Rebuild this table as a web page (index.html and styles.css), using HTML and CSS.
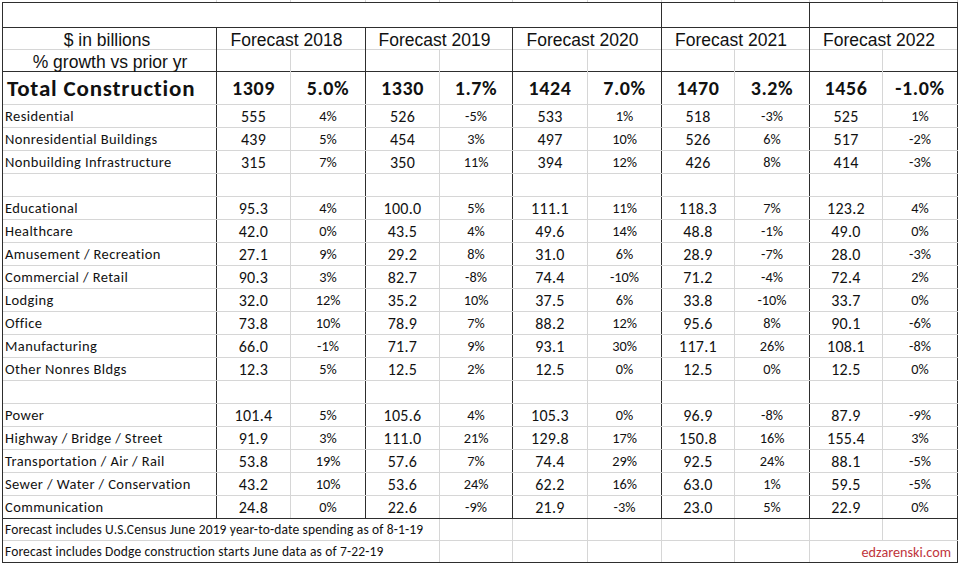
FILE: index.html
```html
<!DOCTYPE html>
<html>
<head>
<meta charset="utf-8">
<link rel="stylesheet" href="styles.css">
</head>
<body>
<div class="sliver"><span></span><span></span><span></span><span></span><span></span><span></span><span></span><span></span><span></span><span></span><span></span></div>
<div class="sheet">
  <div class="row top"><div class="c s7 dr"></div><div class="c s2 dr"></div><div class="c s2 dr"></div></div>
  <div class="row hdr">
    <div class="c dr arial lh">$ in billions</div>
    <div class="c s2 dr arial fc">Forecast 2018</div>
    <div class="c s2 dr arial fc">Forecast 2019</div>
    <div class="c s2 dr arial fc">Forecast 2020</div>
    <div class="c s2 dr arial fc">Forecast 2021</div>
    <div class="c s2 dr arial fc">Forecast 2022</div>
  </div>
  <div class="row sub">
    <div class="c dr arial lh2">% growth vs prior yr</div>
    <div class="c"></div><div class="c dr"></div><div class="c"></div><div class="c dr"></div><div class="c"></div><div class="c dr"></div><div class="c"></div><div class="c dr"></div><div class="c"></div><div class="c dr"></div>
  </div>
  <div class="row total">
    <div class="c lbl">Total Construction</div>
    <div class="c v">1309</div><div class="c p">5.0%</div>
    <div class="c v">1330</div><div class="c p">1.7%</div>
    <div class="c v">1424</div><div class="c p">7.0%</div>
    <div class="c v">1470</div><div class="c p">3.2%</div>
    <div class="c v">1456</div><div class="c p">-1.0%</div>
  </div>
  <div class="row data"><div class="c lbl">Residential</div><div class="c v">555</div><div class="c p">4%</div><div class="c v">526</div><div class="c p">-5%</div><div class="c v">533</div><div class="c p">1%</div><div class="c v">518</div><div class="c p">-3%</div><div class="c v">525</div><div class="c p">1%</div></div>
  <div class="row data"><div class="c lbl">Nonresidential Buildings</div><div class="c v">439</div><div class="c p">5%</div><div class="c v">454</div><div class="c p">3%</div><div class="c v">497</div><div class="c p">10%</div><div class="c v">526</div><div class="c p">6%</div><div class="c v">517</div><div class="c p">-2%</div></div>
  <div class="row data"><div class="c lbl">Nonbuilding Infrastructure</div><div class="c v">315</div><div class="c p">7%</div><div class="c v">350</div><div class="c p">11%</div><div class="c v">394</div><div class="c p">12%</div><div class="c v">426</div><div class="c p">8%</div><div class="c v">414</div><div class="c p">-3%</div></div>
  <div class="row data"><div class="c lbl"></div><div class="c v"></div><div class="c p"></div><div class="c v"></div><div class="c p"></div><div class="c v"></div><div class="c p"></div><div class="c v"></div><div class="c p"></div><div class="c v"></div><div class="c p"></div></div>
  <div class="row data"><div class="c lbl">Educational</div><div class="c v">95.3</div><div class="c p">4%</div><div class="c v">100.0</div><div class="c p">5%</div><div class="c v">111.1</div><div class="c p">11%</div><div class="c v">118.3</div><div class="c p">7%</div><div class="c v">123.2</div><div class="c p">4%</div></div>
  <div class="row data"><div class="c lbl">Healthcare</div><div class="c v">42.0</div><div class="c p">0%</div><div class="c v">43.5</div><div class="c p">4%</div><div class="c v">49.6</div><div class="c p">14%</div><div class="c v">48.8</div><div class="c p">-1%</div><div class="c v">49.0</div><div class="c p">0%</div></div>
  <div class="row data"><div class="c lbl">Amusement / Recreation</div><div class="c v">27.1</div><div class="c p">9%</div><div class="c v">29.2</div><div class="c p">8%</div><div class="c v">31.0</div><div class="c p">6%</div><div class="c v">28.9</div><div class="c p">-7%</div><div class="c v">28.0</div><div class="c p">-3%</div></div>
  <div class="row data"><div class="c lbl">Commercial / Retail</div><div class="c v">90.3</div><div class="c p">3%</div><div class="c v">82.7</div><div class="c p">-8%</div><div class="c v">74.4</div><div class="c p">-10%</div><div class="c v">71.2</div><div class="c p">-4%</div><div class="c v">72.4</div><div class="c p">2%</div></div>
  <div class="row data"><div class="c lbl">Lodging</div><div class="c v">32.0</div><div class="c p">12%</div><div class="c v">35.2</div><div class="c p">10%</div><div class="c v">37.5</div><div class="c p">6%</div><div class="c v">33.8</div><div class="c p">-10%</div><div class="c v">33.7</div><div class="c p">0%</div></div>
  <div class="row data"><div class="c lbl">Office</div><div class="c v">73.8</div><div class="c p">10%</div><div class="c v">78.9</div><div class="c p">7%</div><div class="c v">88.2</div><div class="c p">12%</div><div class="c v">95.6</div><div class="c p">8%</div><div class="c v">90.1</div><div class="c p">-6%</div></div>
  <div class="row data"><div class="c lbl">Manufacturing</div><div class="c v">66.0</div><div class="c p">-1%</div><div class="c v">71.7</div><div class="c p">9%</div><div class="c v">93.1</div><div class="c p">30%</div><div class="c v">117.1</div><div class="c p">26%</div><div class="c v">108.1</div><div class="c p">-8%</div></div>
  <div class="row data"><div class="c lbl">Other Nonres Bldgs</div><div class="c v">12.3</div><div class="c p">5%</div><div class="c v">12.5</div><div class="c p">2%</div><div class="c v">12.5</div><div class="c p">0%</div><div class="c v">12.5</div><div class="c p">0%</div><div class="c v">12.5</div><div class="c p">0%</div></div>
  <div class="row data"><div class="c lbl"></div><div class="c v"></div><div class="c p"></div><div class="c v"></div><div class="c p"></div><div class="c v"></div><div class="c p"></div><div class="c v"></div><div class="c p"></div><div class="c v"></div><div class="c p"></div></div>
  <div class="row data"><div class="c lbl">Power</div><div class="c v">101.4</div><div class="c p">5%</div><div class="c v">105.6</div><div class="c p">4%</div><div class="c v">105.3</div><div class="c p">0%</div><div class="c v">96.9</div><div class="c p">-8%</div><div class="c v">87.9</div><div class="c p">-9%</div></div>
  <div class="row data"><div class="c lbl">Highway / Bridge / Street</div><div class="c v">91.9</div><div class="c p">3%</div><div class="c v">111.0</div><div class="c p">21%</div><div class="c v">129.8</div><div class="c p">17%</div><div class="c v">150.8</div><div class="c p">16%</div><div class="c v">155.4</div><div class="c p">3%</div></div>
  <div class="row data"><div class="c lbl">Transportation / Air / Rail</div><div class="c v">53.8</div><div class="c p">19%</div><div class="c v">57.6</div><div class="c p">7%</div><div class="c v">74.4</div><div class="c p">29%</div><div class="c v">92.5</div><div class="c p">24%</div><div class="c v">88.1</div><div class="c p">-5%</div></div>
  <div class="row data"><div class="c lbl">Sewer / Water / Conservation</div><div class="c v">43.2</div><div class="c p">10%</div><div class="c v">53.6</div><div class="c p">24%</div><div class="c v">62.2</div><div class="c p">16%</div><div class="c v">63.0</div><div class="c p">1%</div><div class="c v">59.5</div><div class="c p">-5%</div></div>
  <div class="row data last"><div class="c lbl">Communication</div><div class="c v">24.8</div><div class="c p">0%</div><div class="c v">22.6</div><div class="c p">-9%</div><div class="c v">21.9</div><div class="c p">-3%</div><div class="c v">23.0</div><div class="c p">5%</div><div class="c v">22.9</div><div class="c p">0%</div></div>
  <div class="row foot">
    <div class="c s4 note">Forecast includes U.S.Census June 2019 year-to-date spending as of 8-1-19</div>
    <div class="c"></div><div class="c"></div><div class="c"></div><div class="c"></div><div class="c"></div><div class="c"></div><div class="c dr"></div>
  </div>
  <div class="row foot end">
    <div class="c s4 note">Forecast includes Dodge construction starts June data as of 7-22-19</div>
    <div class="c"></div><div class="c"></div><div class="c"></div><div class="c"></div><div class="c"></div><div class="c s2 dr credit">edzarenski.com</div>
  </div>
</div>
</body>
</html>
```

FILE: styles.css
```css
:root {
  --dark: #2e2e2e;
  --light: #d6d6d6;
  --cols: 214px 74px 75px 74px 73px 75px 74px 73px 75px 73px 75px;
}

* { box-sizing: border-box; }

html, body {
  margin: 0;
  padding: 0;
  background: #fff;
}

body {
  width: 960px;
  height: 564px;
  overflow: hidden;
  font-family: Carlito, Calibri, Lato, "Open Sans", sans-serif;
  color: #111;
}

.sliver {
  display: grid;
  grid-template-columns: var(--cols);
  height: 2px;
  margin-left: 3px;
}
.sliver span { border-right: 1px solid var(--light); }

.sheet {
  margin-left: 2px;
  width: 956px;
  border-left: 1px solid var(--dark);
}

.row {
  display: grid;
  grid-template-columns: var(--cols);
  border-bottom: 1px solid var(--light);
}

.c {
  border-right: 1px solid var(--light);
  display: flex;
  align-items: center;
  justify-content: center;
  white-space: nowrap;
  min-width: 0;
}

.dr, .lbl, .p { border-right-color: var(--dark); }

.s2 { grid-column: span 2; }
.s4 { grid-column: span 4; }
.s7 { grid-column: span 7; }

.top {
  height: 26px;
  border-top: 1px solid var(--dark);
  border-bottom-color: var(--dark);
}

.hdr { height: 22px; }
.sub { height: 22px; border-bottom-color: var(--dark); }

.arial {
  font-family: "Liberation Sans", Arial, sans-serif;
  font-size: 17.5px;
  color: #111;
}
.hdr .c { padding-top: 2px; }
.lh { padding-right: 5px; }
.lh2 { padding-left: 1px; padding-top: 2px; }
.fc { padding-right: 9px; }

.total { height: 33px; }
.total .lbl {
  font-weight: 700;
  font-size: 23px;
  letter-spacing: 0.8px;
  padding-left: 4px;
}
.total .v, .total .p {
  font-weight: 700;
  font-size: 20px;
  letter-spacing: 0.6px;
}

.data { height: 23px; }
.data.last { border-bottom-color: var(--dark); }

.lbl {
  justify-content: flex-start;
  padding-left: 2px;
  font-size: 14.5px;
  letter-spacing: 0.4px;
}
.v { font-size: 16px; letter-spacing: 0.3px; }
.p { font-size: 14.3px; }

.foot { height: 22px; }
.foot.end { border-bottom-color: var(--dark); }

.note {
  justify-content: flex-start;
  padding-left: 2px;
  font-size: 13.5px;
  letter-spacing: 0.15px;
  overflow: visible;
}

.credit {
  justify-content: flex-end;
  padding-right: 6px;
  font-size: 14.2px;
  color: #c0343c;
}
```
